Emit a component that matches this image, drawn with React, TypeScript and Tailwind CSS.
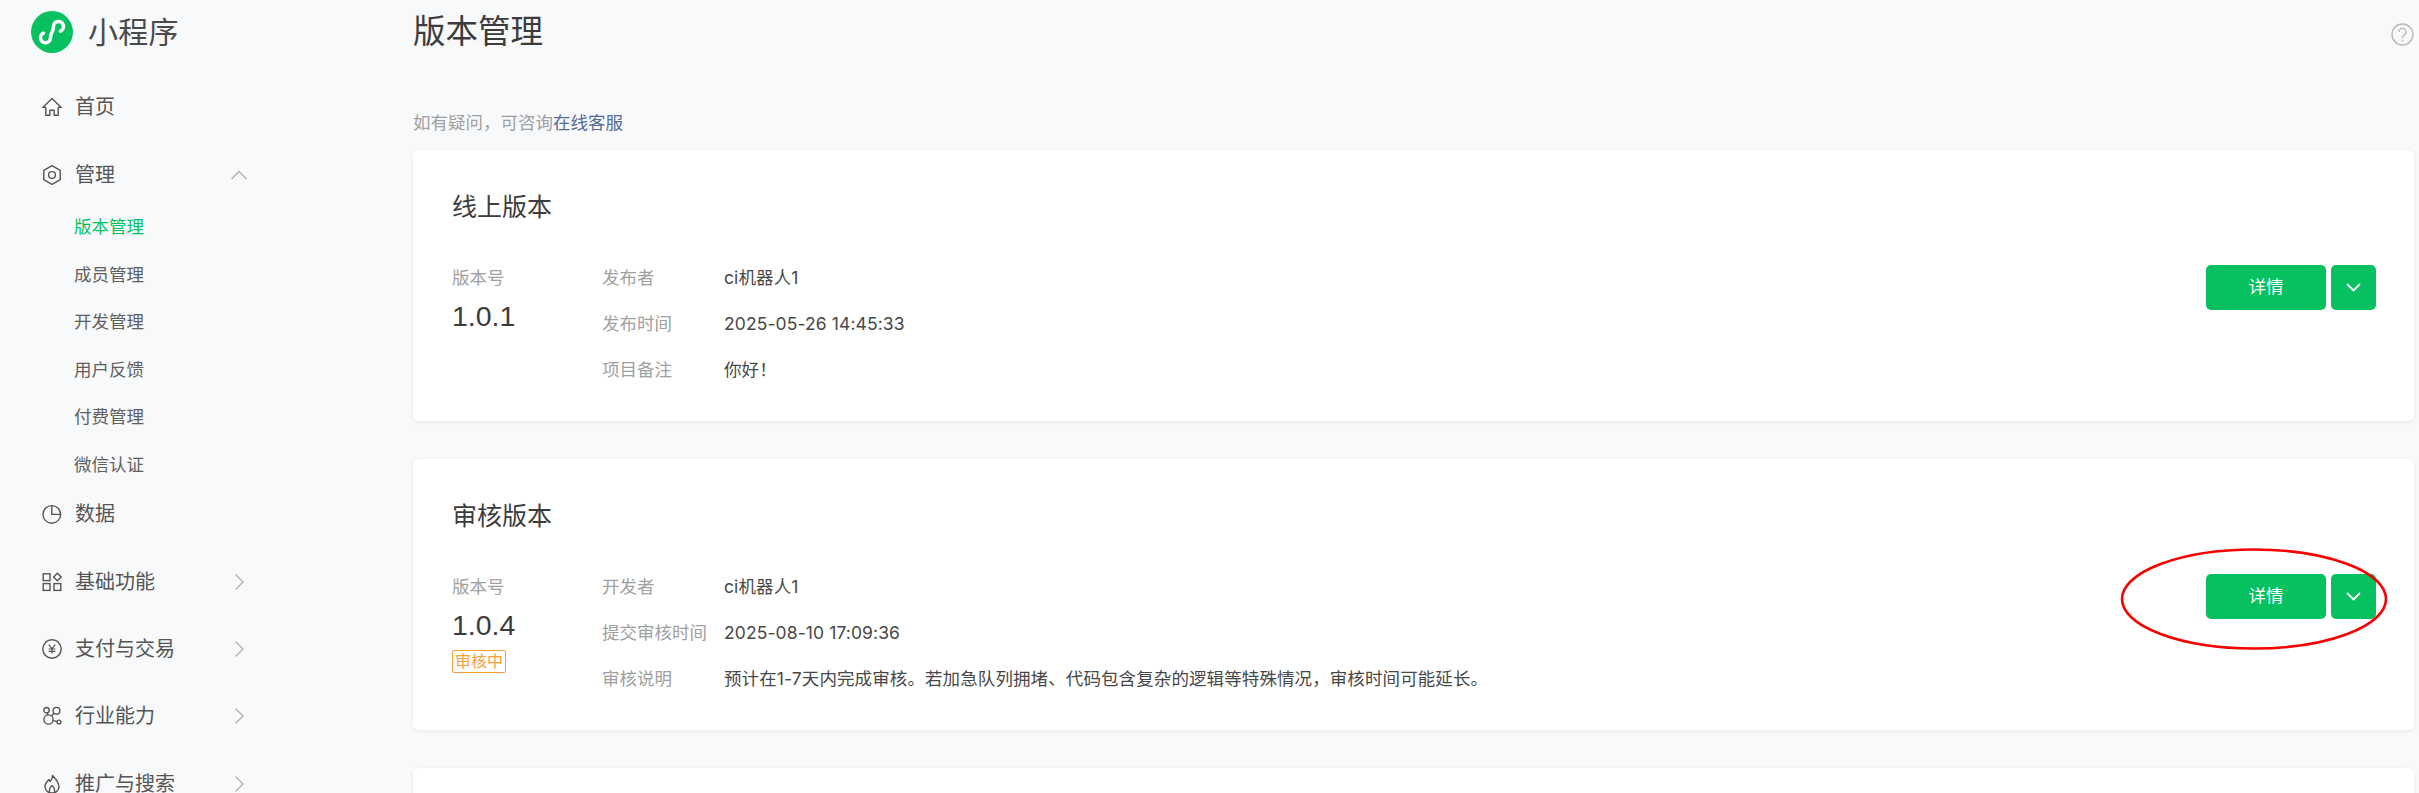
import React from "react";

const font = "[font-family:Inter,'Noto_Sans_CJK_SC',sans-serif]";

const Chevron = ({ dir }: { dir: "up" | "right" }) => (
  <svg width="18" height="18" viewBox="0 0 18 18" fill="none" stroke="#b2b2b2" strokeWidth="1.4" className="shrink-0">
    {dir === "up" ? <path d="M1.5 13 9 5.5 16.5 13" /> : <path d="M5.5 1.5 13 9 5.5 16.5" />}
  </svg>
);

const ic = { width: 20, height: 20, viewBox: "0 0 20 20", fill: "none", stroke: "#555", strokeWidth: 1.4 } as const;
const icons: Record<string, React.ReactNode> = {
  home: <svg {...ic}><path d="M.8 10.400 10 1.600l9.200 8.800H16.200v7.800h-4v-5H7.800v5h-4v-7.800z" strokeLinejoin="round" /></svg>,
  hex: <svg {...ic}><path d="M10 .7 18.200 5.300v9.400L10 19.300 1.800 14.700V5.300z" strokeLinejoin="round" /><circle cx="10" cy="10" r="3.400" /></svg>,
  pie: <svg {...ic}><circle cx="9.800" cy="10.400" r="8.800" /><path d="M9.800 1.600v8.800h8.800" /></svg>,
  apps: <svg {...ic}><rect x="1.200" y="1.800" width="6.800" height="6.800" /><rect x="1.200" y="11.600" width="6.800" height="6.800" /><rect x="12" y="11.600" width="6.800" height="6.800" /><path d="m15.400 1.200 3.800 3.800-3.800 3.800L11.600 5z" /></svg>,
  pay: <svg {...ic}><circle cx="10" cy="10" r="9.200" /><path d="m6.800 5.600 3.200 4.200 3.200-4.200M6.600 10h6.800M6.600 12.400h6.800M10 9.800v5" strokeWidth="1.200" /></svg>,
  ind: <svg {...ic}><circle cx="6.500" cy="13.500" r="4.600" /><circle cx="4.500" cy="4.200" r="2.700" /><circle cx="14.500" cy="4.800" r="3.400" /><circle cx="17" cy="16" r="1.900" /><path d="m5.200 6.800.6 2.200M12 7.200l-2.400 2.800M11 14.400l4.200 1.200" /></svg>,
  fire: <svg {...ic}><path d="M10.400 1.400c.4 3-1 4.600-2.400 6.200-.6-.8-.9-1.400-1-2.200C4.600 7.600 3 10 3 12.600 3 16.400 6 19 10 19s7-2.600 7-6.200c0-4.600-3.600-8.200-6.600-11.400Z" strokeLinejoin="round" /><path d="M10 11.500c-2 1.500-3 3-2.600 7.200M10 11.500c2 1.500 3 3 2.600 7.200" /></svg>,
};

const Menu = ({ icon, label, chevron, className = "" }: { icon: string; label: string; chevron?: "up" | "right"; className?: string }) => (
  <div className={`flex items-center h-[46px] pl-[42px] w-[248px] shrink-0 ${className}`}>
    <span className="w-[20px] h-[20px] flex shrink-0">{icons[icon]}</span>
    <span className="ml-[13px] flex-1 text-[20px] leading-[46px] text-[#555555]">{label}</span>
    {chevron && <Chevron dir={chevron} />}
  </div>
);

const Sub = ({ label, active }: { label: string; active?: boolean }) => (
  <div className={`h-[47.5px] pl-[74px] text-[17.5px] leading-[47.5px] ${active ? "text-[#07c160]" : "text-[#606060]"}`}>{label}</div>
);

const Buttons = () => (
  <div className="flex gap-[5px] shrink-0 mt-[10px]">
    <button className="w-[120px] h-[45px] rounded-[5px] bg-[#07c160] text-white text-[17.5px]">详情</button>
    <button className="w-[45px] h-[45px] rounded-[5px] bg-[#07c160] flex items-center justify-center">
      <svg width="15" height="9" viewBox="0 0 15 9" fill="none" stroke="#fff" strokeWidth="1.8"><path d="m1 1 6.500 6.500L14 1" /></svg>
    </button>
  </div>
);

const Row = ({ label, value }: { label: string; value: string }) => (
  <div className="flex h-[46px] items-center text-[17.5px] leading-[46px]">
    <span className="w-[122px] shrink-0 text-[#a0a0a0]">{label}</span>
    <span className="text-[#484848] tracking-[0.1px]">{value}</span>
  </div>
);

const Card = ({ title, version, badge, rows }: { title: string; version: string; badge?: string; rows: [string, string][] }) => (
  <section className="h-[271px] bg-white rounded-[6px] shadow-[0_1px_4px_rgba(0,0,0,0.08)] pl-[39px] pr-[38px] shrink-0">
    <h2 className="pt-[39px] h-[105px] text-[25px] leading-[36px] text-[#3c3c3c]">{title}</h2>
    <div className="flex items-start">
      <div className="w-[150px] shrink-0">
        <div className="text-[17.5px] leading-[46px] text-[#a0a0a0]">版本号</div>
        <div className="text-[28.5px] leading-[30px] text-[#3c3c3c] [font-family:'Liberation_Sans',sans-serif]">{version}</div>
        {badge && (
          <span className="inline-block mt-[10px] h-[23px] px-[2px] border border-[#fa9d3b] rounded-[2px] text-[#fa9d3b] text-[16px] leading-[21px]">{badge}</span>
        )}
      </div>
      <div className="flex-1 min-w-0">
        {rows.map(([l, v]) => <Row key={l} label={l} value={v} />)}
      </div>
      <Buttons />
    </div>
  </section>
);

export default function App() {
  return (
    <div className={`relative flex h-[793px] w-full overflow-hidden bg-[#f8f9fb] ${font}`}>
      <aside className="w-[413px] shrink-0">
        <div className="flex items-center h-[64px] pl-[31px]">
          <svg width="42" height="42" viewBox="0 0 42 42" className="shrink-0">
            <circle cx="21" cy="21" r="21" fill="#07c160" />
            <path d="M12.500 22.200A5 5 0 1 0 19.500 26.500C19.500 21.500 22.500 20.500 22.500 15.800A5 5 0 1 1 29.500 20.100" fill="none" stroke="#fff" strokeWidth="3.500" strokeLinecap="round" />
          </svg>
          <span className="ml-[15px] text-[30px] leading-[40px] tracking-[0.3px] text-[#4a4a4a]">小程序</span>
        </div>
        <Menu icon="home" label="首页" className="mt-[20px]" />
        <Menu icon="hex" label="管理" chevron="up" className="mt-[22px]" />
        <div className="mt-[5px]">
          {["版本管理", "成员管理", "开发管理", "用户反馈", "付费管理", "微信认证"].map((s, i) => <Sub key={s} label={s} active={i === 0} />)}
        </div>
        <Menu icon="pie" label="数据" className="mt-[3px]" />
        <Menu icon="apps" label="基础功能" chevron="right" className="mt-[22px]" />
        <Menu icon="pay" label="支付与交易" chevron="right" className="mt-[21px]" />
        <Menu icon="ind" label="行业能力" chevron="right" className="mt-[21px]" />
        <Menu icon="fire" label="推广与搜索" chevron="right" className="mt-[22px]" />
      </aside>
      <main className="flex-1 min-w-0 pr-[5px] flex flex-col">
        <header className="flex justify-between items-center h-[64px] shrink-0">
          <h1 className="text-[32.5px] leading-[68px] text-[#3c3c3c]">版本管理</h1>
          <svg width="23" height="23" viewBox="0 0 23 23" fill="none" className="mt-[5px]">
            <circle cx="11.500" cy="11.500" r="10.500" stroke="#b8b8b8" strokeWidth="1.300" />
            <path d="M8 9a3.500 3.500 0 1 1 5.500 2.800c-1.400.9-2 1.500-2 3" stroke="#b8b8b8" strokeWidth="1.400" />
            <circle cx="11.500" cy="17.500" r=".9" fill="#b8b8b8" />
          </svg>
        </header>
        <p className="mt-[44px] h-[42px] text-[17.5px] leading-[30px] text-[#a0a0a0] shrink-0">
          如有疑问，可咨询<span className="text-[#576b95]">在线客服</span>
        </p>
        <div className="flex flex-col gap-[38px]">
          <Card title="线上版本" version="1.0.1" rows={[["发布者", "ci机器人1"], ["发布时间", "2025-05-26 14:45:33"], ["项目备注", "你好！"]]} />
          <Card title="审核版本" version="1.0.4" badge="审核中" rows={[["开发者", "ci机器人1"], ["提交审核时间", "2025-08-10 17:09:36"], ["审核说明", "预计在1-7天内完成审核。若加急队列拥堵、代码包含复杂的逻辑等特殊情况，审核时间可能延长。"]]} />
          <section className="h-[100px] bg-white rounded-[6px] shadow-[0_1px_4px_rgba(0,0,0,0.08)] shrink-0" />
        </div>
      </main>
      <svg width="270" height="106" viewBox="0 0 270 106" fill="none" className="absolute left-[2119px] top-[546px]">
        <ellipse cx="135" cy="53" rx="132" ry="49.500" stroke="#f70000" strokeWidth="2.600" />
      </svg>
    </div>
  );
}
